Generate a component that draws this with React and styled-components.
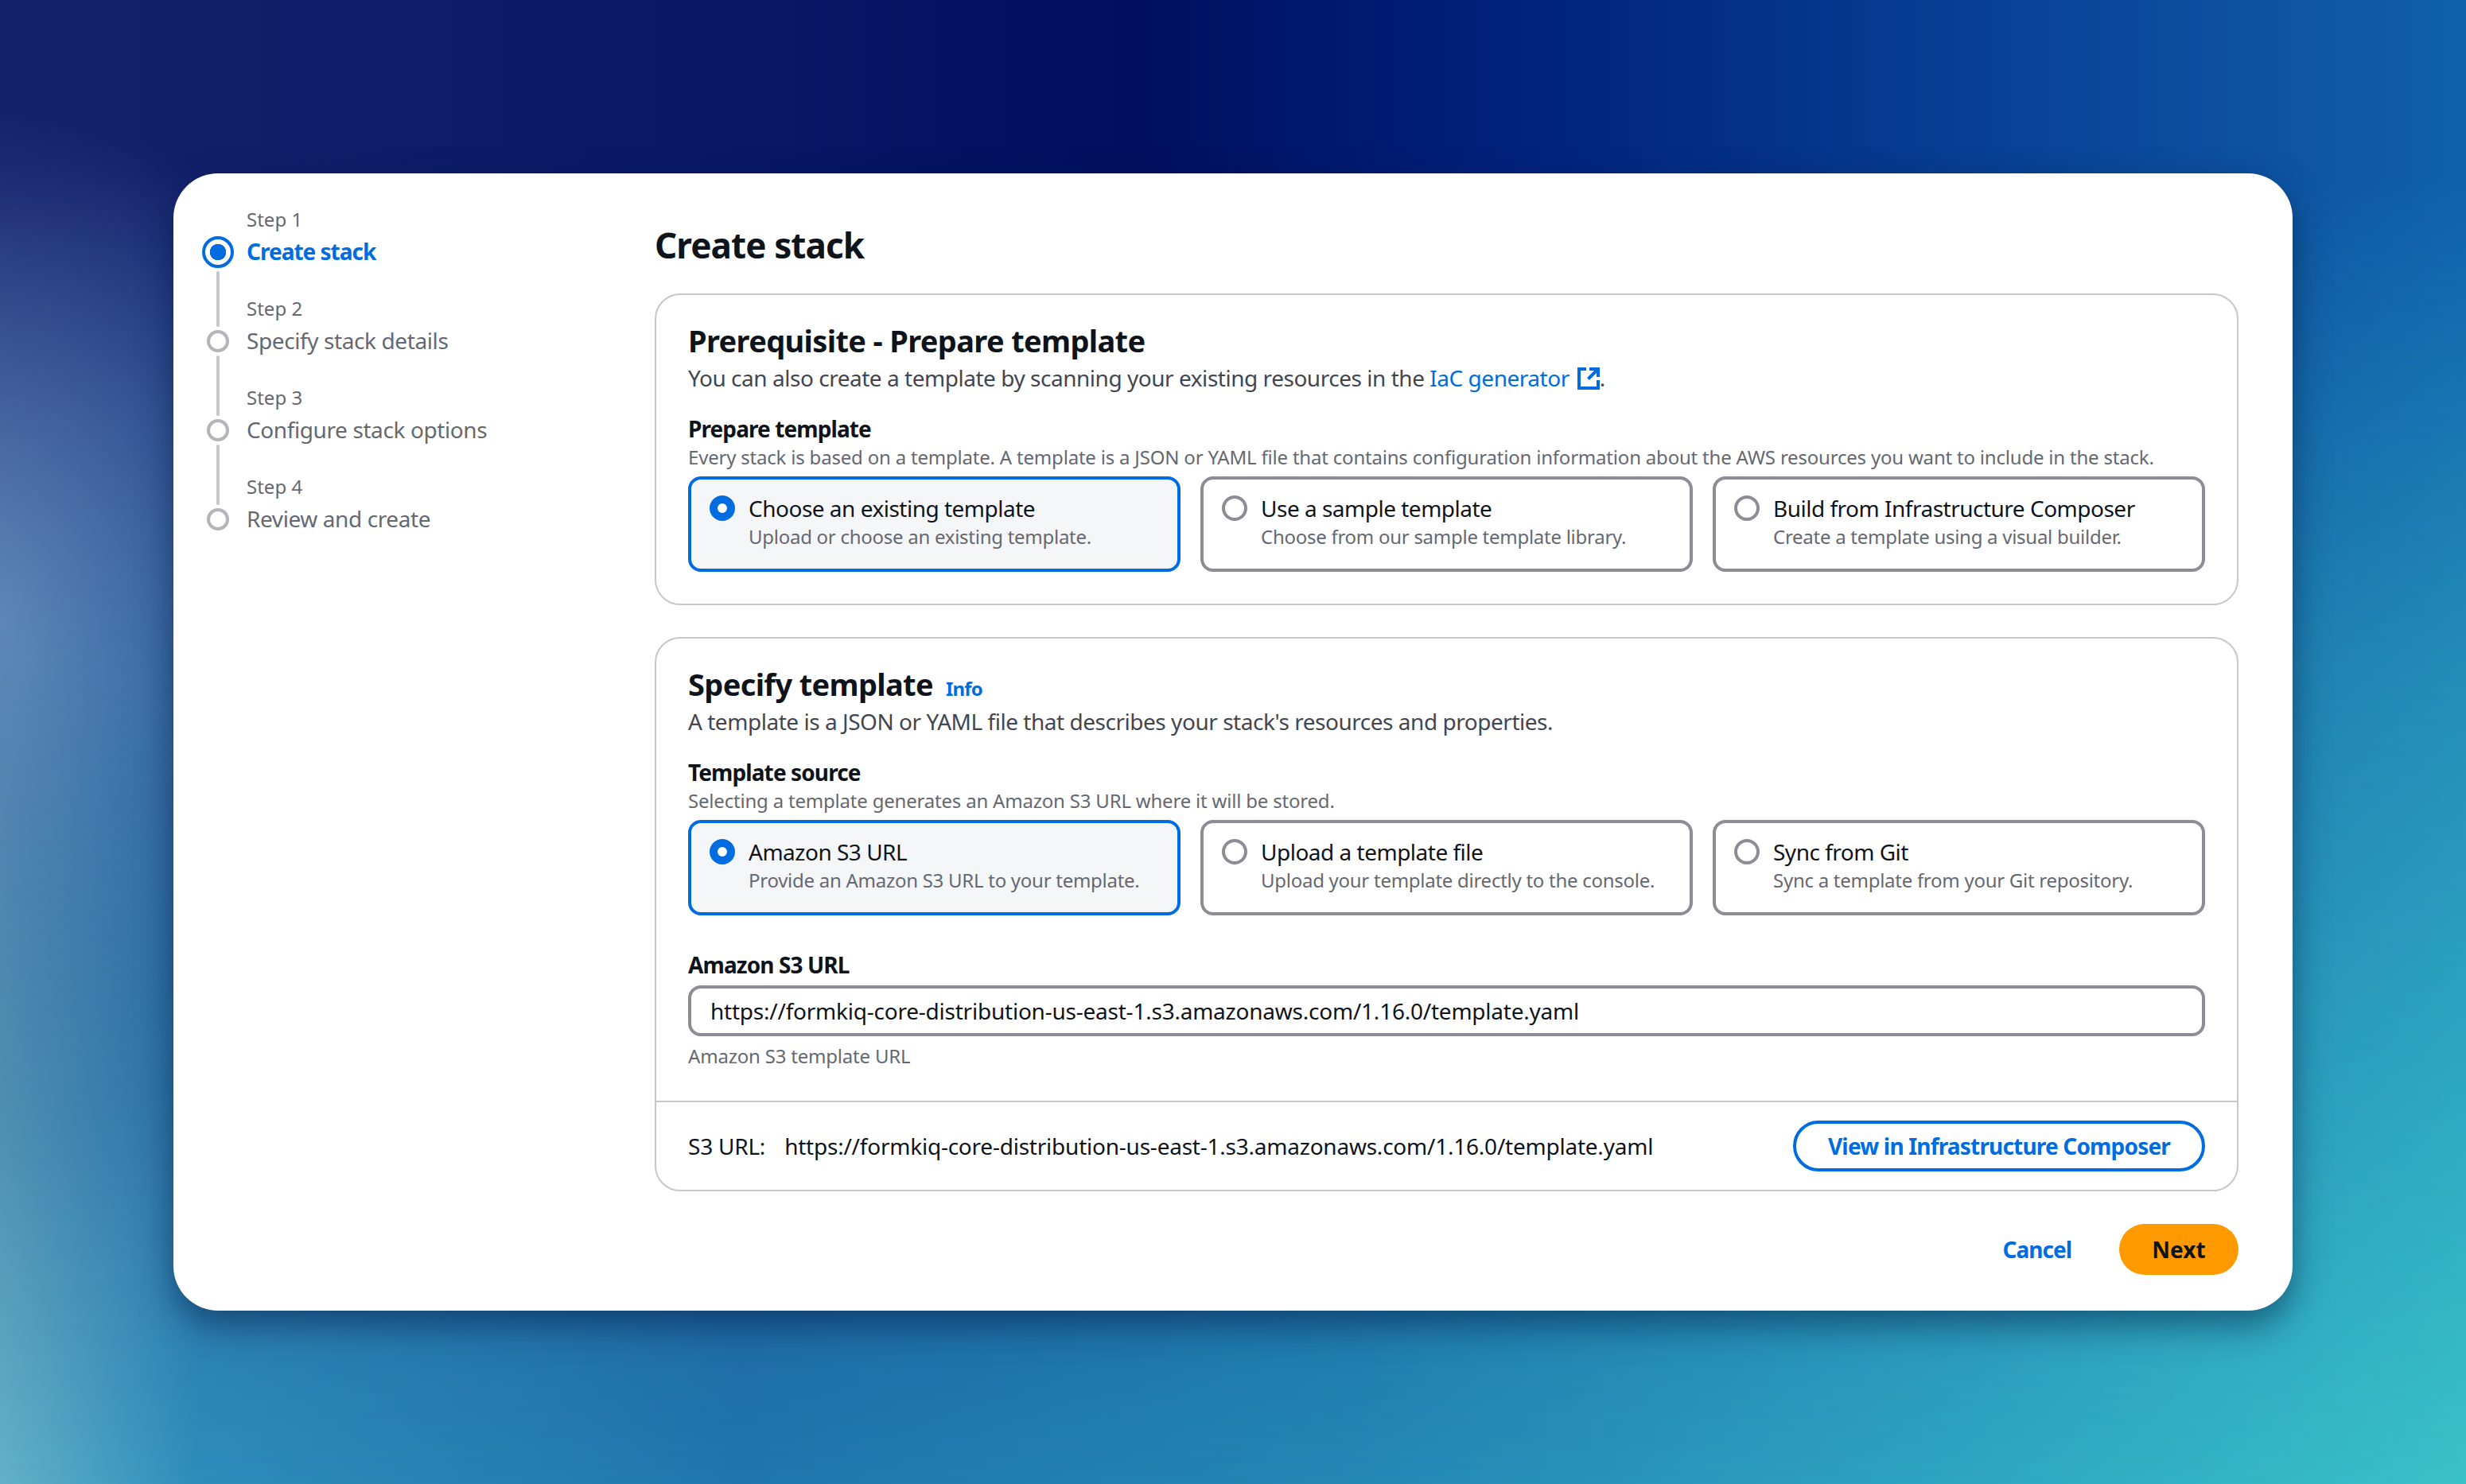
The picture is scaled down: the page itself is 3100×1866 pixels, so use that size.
import React from 'react';
import styled, { createGlobalStyle } from 'styled-components';

const GlobalStyle = createGlobalStyle`
  html, body {
    margin: 0;
    padding: 0;
  }
  body {
    font-family: 'Noto Sans', 'Open Sans', sans-serif;
    color: #0f141a;
  }
`;

const Page = styled.div`
  position: relative;
  width: 3100px;
  height: 1866px;
  padding: 218px 218px 0;
  box-sizing: border-box;
  overflow: hidden;
  background: linear-gradient(to right, #62b2c9 0%, #2f8dbb 8%, #2176af 30%, #2488b6 55%, #2fa6c1 80%, #3ac2c9 100%);

  &:before {
    content: '';
    position: absolute;
    inset: 0;
    background:
      radial-gradient(ellipse 520px 640px at 0 780px, rgba(112, 130, 190, 0.75), rgba(112, 130, 190, 0) 100%),
      linear-gradient(to right, #14226c 0%, #0b1a68 25%, #000f60 46%, #00237c 62%, #083f94 80%, #1060ab 100%);
    -webkit-mask-image: linear-gradient(to bottom, #000 0%, #000 12%, rgba(0, 0, 0, 0.55) 45%, rgba(0, 0, 0, 0) 100%);
    mask-image: linear-gradient(to bottom, #000 0%, #000 12%, rgba(0, 0, 0, 0.55) 45%, rgba(0, 0, 0, 0) 100%);
  }
`;

const Window = styled.div`
  position: relative;
  display: grid;
  grid-template-columns: 605px 1fr;
  width: 2664px;
  height: 1430px;
  padding-right: 68px;
  box-sizing: border-box;
  background: #fff;
  border-radius: 56px;
  box-shadow: 0 18px 44px rgba(0, 20, 60, 0.5);
`;

const Wizard = styled.nav`
  display: flex;
  gap: 16px;
  padding: 42px 0 0 36px;
  font-size: 28px;
`;

const Rail = styled.div`
  display: flex;
  flex-direction: column;
  align-items: center;
  gap: 4px;
  width: 40px;
  padding-top: 37px;
`;

const Marker = styled.div`
  box-sizing: border-box;
  width: ${(p) => (p.$active ? '40px' : '28px')};
  height: ${(p) => (p.$active ? '40px' : '28px')};
  border-radius: 50%;
  border: 4px solid ${(p) => (p.$active ? '#006ce0' : '#b4b4bb')};
  background: ${(p) => (p.$active ? 'radial-gradient(circle, #006ce0 10px, #fff 10.5px)' : '#fff')};
  flex: none;
`;

const RailLine = styled.div`
  width: 4px;
  height: ${(p) => p.$h}px;
  background: #c6c6cd;
  border-radius: 2px;
`;

const StepList = styled.div`
  display: flex;
  flex-direction: column;
  gap: 36px;
`;

const Step = styled.div`
  display: flex;
  flex-direction: column;
  gap: 4px;
`;

const StepNumber = styled.div`
  font-size: 24px;
  line-height: 32px;
  color: #656871;
`;

const StepName = styled.div`
  font-size: 28px;
  line-height: 40px;
  font-weight: ${(p) => (p.$active ? 700 : 400)};
  letter-spacing: ${(p) => (p.$active ? '-1px' : '-0.4px')};
  color: ${(p) => (p.$active ? '#006ce0' : '#656871')};
`;

const Main = styled.main`
  display: flex;
  flex-direction: column;
  padding-top: 62px;
`;

const PageTitle = styled.h1`
  margin: 0 0 33px;
  font-size: 44px;
  line-height: 56px;
  font-weight: 700;
  letter-spacing: -0.9px;
  color: #0f141a;
`;

const Section = styled.section`
  box-sizing: border-box;
  border: 2px solid #c6c6cd;
  border-radius: 32px;
  margin-bottom: ${(p) => p.$mb || 0}px;
`;

const SectionBody = styled.div`
  padding: 35px 40px ${(p) => p.$pb}px;
`;

const Heading = styled.h2`
  margin: 0 0 5px;
  font-size: 38px;
  line-height: 44px;
  font-weight: 700;
  letter-spacing: -0.65px;
  color: #0f141a;
`;

const InfoLink = styled.a`
  margin-left: 16px;
  font-size: 24px;
  line-height: 1;
  font-weight: 700;
  letter-spacing: -0.8px;
  color: #006ce0;
`;

const Description = styled.p`
  margin: 0 0 24px;
  font-size: 28px;
  line-height: 40px;
  letter-spacing: -0.47px;
  color: #424650;
`;

const Link = styled.a`
  color: #006ce0;
`;

const ExternalIcon = styled.svg`
  display: inline-block;
  width: 28px;
  height: 28px;
  margin-left: 10px;
  vertical-align: -4px;
`;

const FieldLabel = styled.div`
  font-size: 28px;
  line-height: 40px;
  font-weight: 700;
  letter-spacing: -0.9px;
  color: #0f141a;
`;

const Hint = styled.div`
  font-size: 24px;
  line-height: 32px;
  letter-spacing: -0.2px;
  color: #656871;
`;

const Tiles = styled.div`
  display: grid;
  grid-template-columns: repeat(3, 1fr);
  gap: 25px;
  margin-top: 8px;
`;

const Tile = styled.div`
  display: flex;
  gap: 17px;
  box-sizing: border-box;
  height: 120px;
  padding: 16px 23px 0;
  border: 4px solid ${(p) => (p.$selected ? '#006ce0' : '#8c8c94')};
  border-radius: 16px;
  background: ${(p) => (p.$selected ? '#f5f6f8' : '#fff')};
`;

const Radio = styled.span`
  box-sizing: border-box;
  flex: none;
  width: 32px;
  height: 32px;
  margin-top: 4px;
  border-radius: 50%;
  background: #fff;
  border: ${(p) => (p.$selected ? '10px solid #006ce0' : '4px solid #8c8c94')};
`;

const TileText = styled.div`
  display: flex;
  flex-direction: column;
`;

const TileTitle = styled.span`
  font-size: 28px;
  line-height: 40px;
  letter-spacing: -0.5px;
  color: #0f141a;
`;

const TileDesc = styled.span`
  font-size: 24px;
  line-height: 32px;
  letter-spacing: -0.27px;
  color: #656871;
`;

const UrlField = styled.div`
  margin-top: 42px;
`;

const UrlInput = styled.div`
  box-sizing: border-box;
  height: 64px;
  margin: 6px 0 9px;
  padding: 0 24px;
  border: 4px solid #8c8c94;
  border-radius: 16px;
  font-size: 28px;
  line-height: 56px;
  letter-spacing: -0.23px;
  color: #0f141a;
`;

const SectionFooter = styled.div`
  display: flex;
  align-items: center;
  justify-content: space-between;
  padding: 23px 40px;
  border-top: 2px solid #c6c6cd;
  font-size: 28px;
  letter-spacing: -0.23px;
  color: #0f141a;
`;

const UrlKey = styled.span`
  margin-right: 24px;
`;

const OutlineButton = styled.button`
  box-sizing: border-box;
  height: 64px;
  padding: 0 40px;
  border: 4px solid #006ce0;
  border-radius: 32px;
  background: #fff;
  font: 700 28px 'Noto Sans', sans-serif;
  letter-spacing: -0.82px;
  color: #006ce0;
`;

const Actions = styled.div`
  display: flex;
  align-items: center;
  justify-content: flex-end;
  gap: 60px;
`;

const CancelLink = styled.a`
  font-size: 28px;
  font-weight: 700;
  letter-spacing: -1px;
  color: #006ce0;
`;

const NextButton = styled.button`
  width: 150px;
  height: 64px;
  border: 0;
  border-radius: 32px;
  background: #ff9900;
  font: 700 28px 'Noto Sans', sans-serif;
  color: #0f141a;
`;

const steps = ['Create stack', 'Specify stack details', 'Configure stack options', 'Review and create'];

const prepareTiles = [
  { title: 'Choose an existing template', desc: 'Upload or choose an existing template.', selected: true },
  { title: 'Use a sample template', desc: 'Choose from our sample template library.' },
  { title: 'Build from Infrastructure Composer', desc: 'Create a template using a visual builder.' },
];

const sourceTiles = [
  { title: 'Amazon S3 URL', desc: 'Provide an Amazon S3 URL to your template.', selected: true },
  { title: 'Upload a template file', desc: 'Upload your template directly to the console.' },
  { title: 'Sync from Git', desc: 'Sync a template from your Git repository.' },
];

const templateUrl = 'https://formkiq-core-distribution-us-east-1.s3.amazonaws.com/1.16.0/template.yaml';

const TileGroup = ({ items }) => (
  <Tiles>
    {items.map((t) => (
      <Tile key={t.title} $selected={t.selected}>
        <Radio $selected={t.selected} />
        <TileText>
          <TileTitle>{t.title}</TileTitle>
          <TileDesc>{t.desc}</TileDesc>
        </TileText>
      </Tile>
    ))}
  </Tiles>
);

const App = () => (
  <Page>
    <GlobalStyle />
    <Window>
      <Wizard>
        <Rail>
          <Marker $active />
          <RailLine $h={70} />
          <Marker />
          <RailLine $h={76} />
          <Marker />
          <RailLine $h={76} />
          <Marker />
        </Rail>
        <StepList>
          {steps.map((name, i) => (
            <Step key={name}>
              <StepNumber>Step {i + 1}</StepNumber>
              <StepName $active={i === 0}>{name}</StepName>
            </Step>
          ))}
        </StepList>
      </Wizard>
      <Main>
        <PageTitle>Create stack</PageTitle>
        <Section $mb={40}>
          <SectionBody $pb={40}>
            <Heading>Prerequisite - Prepare template</Heading>
            <Description>
              You can also create a template by scanning your existing resources in the <Link>IaC generator</Link>
              <ExternalIcon viewBox="0 0 28 28" fill="none" stroke="#006ce0" strokeWidth="4">
                <path d="M11 2H2V26H26V16" />
                <path d="M15 2H26V12M26 2L13.5 14.5" />
              </ExternalIcon>
              .
            </Description>
            <FieldLabel>Prepare template</FieldLabel>
            <Hint>
              Every stack is based on a template. A template is a JSON or YAML file that contains configuration
              information about the AWS resources you want to include in the stack.
            </Hint>
            <TileGroup items={prepareTiles} />
          </SectionBody>
        </Section>
        <Section $mb={41}>
          <SectionBody $pb={40}>
            <Heading>
              Specify template<InfoLink>Info</InfoLink>
            </Heading>
            <Description>A template is a JSON or YAML file that describes your stack's resources and properties.</Description>
            <FieldLabel>Template source</FieldLabel>
            <Hint>Selecting a template generates an Amazon S3 URL where it will be stored.</Hint>
            <TileGroup items={sourceTiles} />
            <UrlField>
              <FieldLabel>Amazon S3 URL</FieldLabel>
              <UrlInput>{templateUrl}</UrlInput>
              <Hint>Amazon S3 template URL</Hint>
            </UrlField>
          </SectionBody>
          <SectionFooter>
            <span>
              <UrlKey>S3 URL:</UrlKey>
              {templateUrl}
            </span>
            <OutlineButton>View in Infrastructure Composer</OutlineButton>
          </SectionFooter>
        </Section>
        <Actions>
          <CancelLink>Cancel</CancelLink>
          <NextButton>Next</NextButton>
        </Actions>
      </Main>
    </Window>
  </Page>
);

export default App;
